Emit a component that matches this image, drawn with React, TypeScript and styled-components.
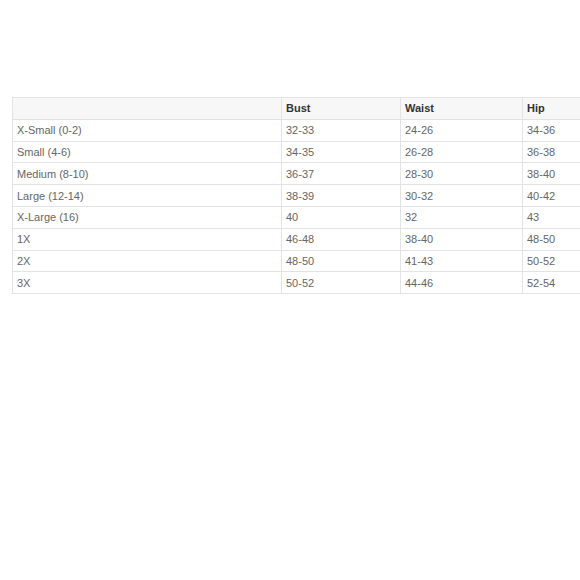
import React from "react";
import styled, { createGlobalStyle } from "styled-components";

const GlobalStyle = createGlobalStyle`
  html, body {
    margin: 0;
    padding: 0;
    background: #fff;
  }
`;

const Page = styled.div`
  width: 580px;
  height: 580px;
  padding: 97px 0 0 12px;
  box-sizing: border-box;
  overflow: hidden;
`;

const Clip = styled.div`
  width: 568px;
  overflow: hidden;
`;

const Table = styled.table`
  border-collapse: collapse;
  table-layout: fixed;
  width: 631px;
  font-family: "Liberation Sans", Arial, sans-serif;
  font-size: 11px;
`;

const Row = styled.tr<{ $head?: boolean }>`
  height: 21.8px;
  background: ${(p) => (p.$head ? "#f7f7f7" : "#fff")};
`;

const Cell = styled.td<{ $head?: boolean }>`
  border: 1px solid #e3e3e3;
  padding: 0 4px;
  vertical-align: middle;
  text-align: left;
  color: ${(p) => (p.$head ? "#333" : "#666")};
  font-weight: ${(p) => (p.$head ? "bold" : "normal")};
  white-space: nowrap;
  overflow: hidden;
`;

const columns = ["", "Bust", "Waist", "Hip"];
const widths = [269, 119, 122, 121];

const rows: string[][] = [
  ["X-Small (0-2)", "32-33", "24-26", "34-36"],
  ["Small (4-6)", "34-35", "26-28", "36-38"],
  ["Medium (8-10)", "36-37", "28-30", "38-40"],
  ["Large (12-14)", "38-39", "30-32", "40-42"],
  ["X-Large (16)", "40", "32", "43"],
  ["1X", "46-48", "38-40", "48-50"],
  ["2X", "48-50", "41-43", "50-52"],
  ["3X", "50-52", "44-46", "52-54"],
];

export default function App() {
  return (
    <>
      <GlobalStyle />
      <Page>
        <Clip>
          <Table>
            <colgroup>
              {widths.map((w, i) => (
                <col key={i} style={{ width: w }} />
              ))}
            </colgroup>
            <thead>
              <Row $head>
                {columns.map((c, i) => (
                  <Cell as="th" key={i} $head>
                    {c}
                  </Cell>
                ))}
              </Row>
            </thead>
            <tbody>
              {rows.map((r) => (
                <Row key={r[0]}>
                  {r.map((v, i) => (
                    <Cell key={i}>{v}</Cell>
                  ))}
                </Row>
              ))}
            </tbody>
          </Table>
        </Clip>
      </Page>
    </>
  );
}
